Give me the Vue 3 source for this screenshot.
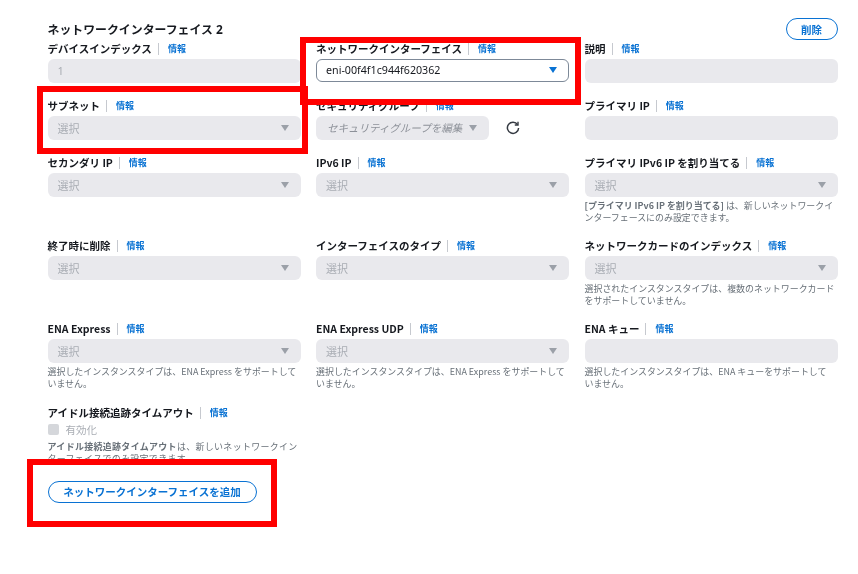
<script setup>
const rows = [
  [
    { label: 'デバイスインデックス', type: 'input', value: '1' },
    { label: 'ネットワークインターフェイス', type: 'active', value: 'eni-00f4f1c944f620362' },
    { label: '説明', type: 'input' }
  ],
  [
    { label: 'サブネット', type: 'select' },
    { label: 'セキュリティグループ', type: 'sg' },
    { label: 'プライマリ IP', type: 'input' }
  ],
  [
    { label: 'セカンダリ IP', type: 'select' },
    { label: 'IPv6 IP', type: 'select' },
    { label: 'プライマリ IPv6 IP を割り当てる', type: 'select', lead: '[プライマリ IPv6 IP を割り当てる]', help: ' は、新しいネットワークインターフェースにのみ設定できます。' }
  ],
  [
    { label: '終了時に削除', type: 'select' },
    { label: 'インターフェイスのタイプ', type: 'select' },
    { label: 'ネットワークカードのインデックス', type: 'select', help: '選択されたインスタンスタイプは、複数のネットワークカードをサポートしていません。' }
  ],
  [
    { label: 'ENA Express', type: 'select', help: '選択したインスタンスタイプは、ENA Express をサポートしていません。' },
    { label: 'ENA Express UDP', type: 'select', help: '選択したインスタンスタイプは、ENA Express をサポートしていません。' },
    { label: 'ENA キュー', type: 'input', narrow: true, help: '選択したインスタンスタイプは、ENA キューをサポートしていません。' }
  ]
]
</script>

<template>
  <div class="page">
    <div class="head">
      <h2 class="title">ネットワークインターフェイス 2</h2>
      <button class="btn del">削除</button>
    </div>

    <div class="grid">
      <template v-for="(row, r) in rows" :key="r">
        <div v-for="f in row" :key="f.label" class="field" :class="{ tall: r > 1 }">
          <div class="label"><b>{{ f.label }}</b><i class="sep"></i><a class="info">情報</a></div>

          <div v-if="f.type === 'input'" class="ctl">{{ f.value }}</div>

          <div v-else-if="f.type === 'active'" class="ctl active">
            <span>{{ f.value }}</span>
            <svg class="tri" width="8" height="6" viewBox="0 0 8 6"><path d="M0 0h8L4 6z" fill="#0972d3" /></svg>
          </div>

          <div v-else-if="f.type === 'select'" class="ctl">
            <span>選択</span>
            <svg class="tri" width="8" height="6" viewBox="0 0 8 6"><path d="M0 0h8L4 6z" fill="#9ba0a8" /></svg>
          </div>

          <div v-else class="sgrow">
            <div class="ctl sg">
              <em>セキュリティグループを編集</em>
              <svg class="tri" width="8" height="6" viewBox="0 0 8 6"><path d="M0 0h8L4 6z" fill="#9ba0a8" /></svg>
            </div>
            <svg class="refresh" width="14" height="14" viewBox="0 0 14 14" fill="none" stroke="#353a42" stroke-width="1.5">
              <path d="M11.6 3.6A5.6 5.6 0 1 0 12.6 7" />
              <path d="M12 .8v3.2H8.8" stroke-width="1.4" />
            </svg>
          </div>

          <p v-if="f.help" class="help" :class="{ narrow: f.narrow }"><b v-if="f.lead">{{ f.lead }}</b>{{ f.help }}</p>
        </div>
      </template>

      <div class="field idle">
        <div class="label"><b>アイドル接続追跡タイムアウト</b><i class="sep"></i><a class="info">情報</a></div>
        <label class="check"><i class="box"></i>有効化</label>
        <p class="help"><b>アイドル接続追跡タイムアウト</b>は、新しいネットワークインターフェイスでのみ設定できます。</p>
      </div>
    </div>

    <button class="btn add">ネットワークインターフェイスを追加</button>

    <div class="mark m1"></div>
    <div class="mark m2"></div>
    <div class="mark m3"></div>
  </div>
</template>

<style>
html, body { margin: 0; background: #fff; }
</style>

<style scoped>
.page {
  position: relative;
  box-sizing: border-box;
  width: 858px;
  height: 574px;
  padding: 18px 0 0 47.5px;
  overflow: hidden;
  background: #fff;
  color: #16191f;
  font-family: "Noto Sans", "Noto Sans CJK JP", sans-serif;
  font-size: 11px;
  filter: blur(0.35px);
}
.head { display: flex; justify-content: space-between; align-items: center; width: 790px; height: 22px; margin-bottom: 0.5px; }
.title { margin: 0; font-size: 11.9px; font-weight: 700; line-height: 20px; }
.btn {
  box-sizing: border-box;
  background: #fff;
  border: 1px solid #0972d3;
  border-radius: 12px;
  color: #0972d3;
  font: 700 10.5px "Noto Sans", "Noto Sans CJK JP", sans-serif;
  padding: 0;
}
.del { width: 52px; height: 22px; }
.grid { display: grid; grid-template-columns: repeat(3, 253px); column-gap: 15.5px; row-gap: 15px; }
.field { min-width: 0; }
.label { display: flex; align-items: center; height: 16px; margin-bottom: 2px; font-family: "Noto Sans CJK JP", sans-serif; font-size: 10.5px; line-height: 16px; }
.label b { font-weight: 700; }
.sep { width: 1px; height: 12px; margin: 0 9px 0 6px; background: #c6c9cf; }
.info { color: #0972d3; font-size: 9px; font-weight: 700; }
.ctl {
  box-sizing: border-box;
  display: flex;
  align-items: center;
  justify-content: space-between;
  height: 24px;
  padding: 0 12px 0 10px;
  border-radius: 6px;
  background: #e9e9ed;
  color: #a9adb4;
  font-size: 11px;
}
.active { height: 23px; background: #fff; border: 1px solid #7d8998; color: #16191f; padding: 0 11px 0 9px; font-size: 10.7px; }
.sgrow { display: flex; align-items: center; gap: 17px; }
.sg { width: 173px; padding-left: 11px; }
.sg em { font-style: italic; color: #8d9199; font-size: 10.5px; }
.refresh { flex: none; }
.help { margin: 3px 0 0; color: #687078; font-family: "Noto Sans CJK JP", sans-serif; font-size: 8.95px; line-height: 12px; }
.help b { font-weight: 700; }
.narrow { padding-right: 4px; }
.tall { height: 68.25px; }
.idle { grid-column: 1; height: 53px; margin-top: 0.5px; }
.idle .help { margin-top: 5px; letter-spacing: 0.35px; }
.check { display: flex; align-items: center; gap: 7px; height: 13px; margin-top: 1px; color: #a9adb4; font-size: 10.5px; }
.box { width: 11px; height: 11px; border-radius: 2px; background: #d5d7db; }
.add { display: block; width: 209px; height: 22px; margin-top: 23px; }
.mark { position: absolute; box-sizing: border-box; border: 6.5px solid #ff0000; }
.m1 { left: 300px; top: 37px; width: 281px; height: 68px; }
.m2 { left: 37px; top: 86px; width: 271px; height: 68px; }
.m3 { left: 27px; top: 459px; width: 250px; height: 68px; }
</style>
